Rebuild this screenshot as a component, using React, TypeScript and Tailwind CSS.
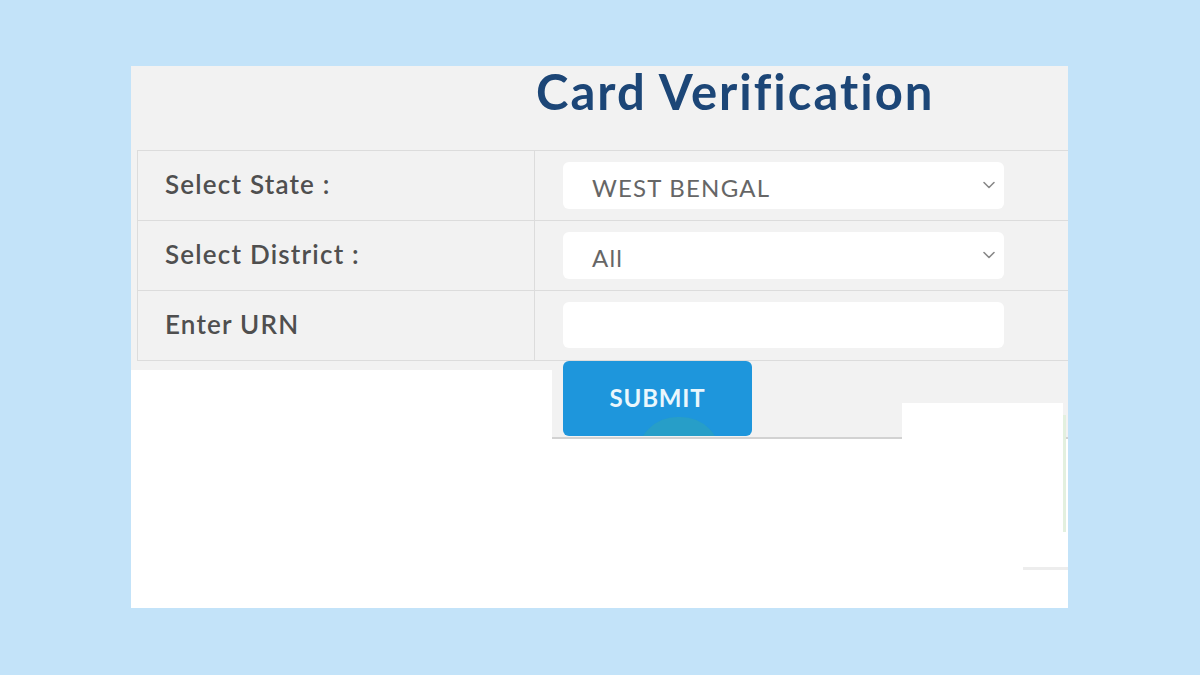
import { ChevronDown } from 'lucide-react';

const rows = [
  { label: 'Select State :', kind: 'select', value: 'WEST BENGAL' },
  { label: 'Select District :', kind: 'select', value: 'All' },
  { label: 'Enter URN', kind: 'input', value: '' },
];

export default function App() {
  return (
    <div
      className="w-[1200px] h-[675px] bg-[#c3e3f9] pt-[66px] pl-[131px] overflow-hidden"
      style={{ fontFamily: 'Lato, "Open Sans", sans-serif' }}
    >
      <div className="relative w-[937px] h-[542px] bg-white flex flex-col">
        <div className="bg-[#f2f2f2]">
          {/* title */}
          <div className="h-[84px] pl-[405px] pt-[1px]">
            <h1 className="text-[49px] leading-[49px] font-bold text-[#1c4677] tracking-[2px]">
              Card Verification
            </h1>
          </div>

          {/* form table */}
          <div className="ml-[6px] border-t border-l border-[#dcdcdc]">
            {rows.map((r) => (
              <div key={r.label} className="flex h-[70px] border-b border-[#dcdcdc]">
                <div className="w-[397px] border-r border-[#dcdcdc] pl-[27px] flex items-center">
                  <span className="text-[26px] font-semibold text-[#4f4f4f] tracking-[1.2px] pb-[3px]">
                    {r.label}
                  </span>
                </div>
                <div className="flex-1 pl-[28px] pt-[11px]">
                  {r.kind === 'select' ? (
                    <div className="w-[441px] h-[47px] bg-white rounded-[6px] flex items-center justify-between pl-[29px] pr-[5px] pt-[4px]">
                      <span className="text-[24px] font-normal text-[#666] tracking-[1.2px]">{r.value}</span>
                      <ChevronDown size={20} strokeWidth={1.9} className="text-[#888] -mt-[5px]" />
                    </div>
                  ) : (
                    <input
                      type="text"
                      className="w-[441px] h-[46px] bg-white rounded-[6px] outline-none px-[29px] text-[24px]"
                    />
                  )}
                </div>
              </div>
            ))}
          </div>

          {/* submit row */}
          <div className="h-[78px] pl-[432px] border-b-2 border-[#d2d2d2]">
            <button className="relative w-[189px] h-[75px] bg-[#1e96dc] rounded-[6px] overflow-hidden text-[#eaf7fc] text-[24px] font-bold tracking-[0.8px]">
              <span className="relative z-10 block -mt-[2px]">SUBMIT</span>
              <span className="absolute left-[74px] top-[56px] w-[84px] h-[40px] rounded-t-full bg-[#2fa6b4] opacity-50" />
            </button>
          </div>
        </div>

        {/* redaction blocks over the lower part */}
        <div className="absolute left-0 top-[304px] w-[421px] h-[238px] bg-white" />
        <div className="absolute left-[771px] top-[337px] w-[161px] h-[164px] bg-white" />
        <div className="absolute left-[932px] top-[349px] w-[3px] h-[117px] bg-[#e3f0df]" />
        <div className="absolute left-[892px] top-[501px] w-[45px] h-[3px] bg-[#ededed]" />
      </div>
    </div>
  );
}
